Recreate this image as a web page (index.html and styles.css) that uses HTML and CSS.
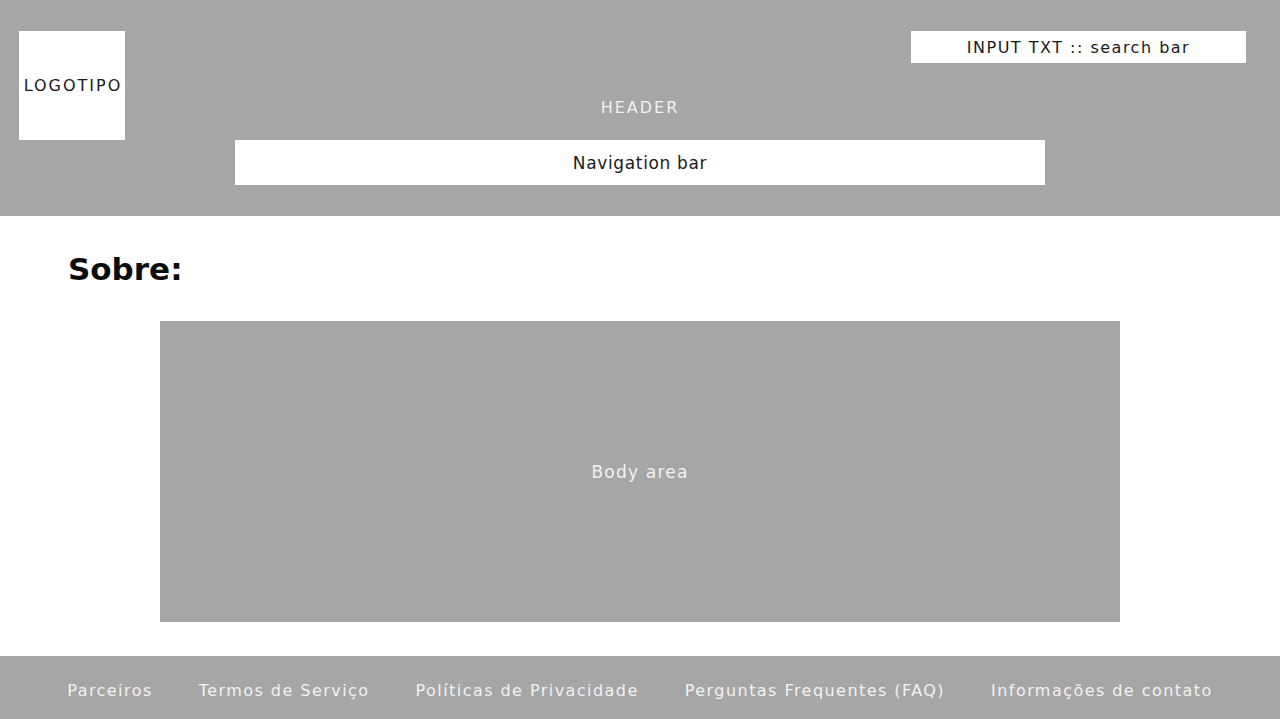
FILE: index.html
```html
<!DOCTYPE html>
<html lang="pt">
<head>
<meta charset="utf-8">
<title>Sobre</title>
<link rel="stylesheet" href="styles.css">
</head>
<body>
<header class="site-header">
  <div class="header-top">
    <div class="logo">LOGOTIPO</div>
    <div class="header-label">HEADER</div>
    <div class="search-wrap"><div class="search">INPUT TXT :: search bar</div></div>
  </div>
  <nav class="nav">Navigation bar</nav>
</header>
<main class="main">
  <h1 class="title">Sobre:</h1>
  <section class="body-area">Body area</section>
</main>
<footer class="site-footer">
  <a class="foot-link">Parceiros</a>
  <a class="foot-link">Termos de Serviço</a>
  <a class="foot-link">Políticas de Privacidade</a>
  <a class="foot-link">Perguntas Frequentes (FAQ)</a>
  <a class="foot-link">Informações de contato</a>
</footer>
</body>
</html>
```
FILE: styles.css
```css
* { box-sizing: border-box; }
html, body { margin: 0; padding: 0; }
body {
  width: 1280px;
  height: 719px;
  overflow: hidden;
  background: #ffffff;
  font-family: "DejaVu Sans", "Liberation Sans", sans-serif;
  color: #1a1a1a;
}
.site-header {
  background: #a6a6a6;
  height: 216px;
  padding: 31px 19px 0 19px;
}
.header-top {
  display: grid;
  grid-template-columns: 1fr auto 1fr;
  align-items: end;
}
.logo {
  width: 106px;
  height: 109px;
  background: #ffffff;
  display: flex;
  align-items: center;
  justify-content: center;
  font-size: 16px;
  letter-spacing: 2px;
  padding-left: 2px;
}
.header-label {
  color: #f2f2f2;
  font-size: 16px;
  letter-spacing: 2px;
  padding-bottom: 23px;
}
.search-wrap {
  align-self: start;
  display: flex;
  justify-content: flex-end;
  padding-right: 15px;
}
.search {
  width: 335px;
  height: 32px;
  background: #ffffff;
  display: flex;
  align-items: center;
  justify-content: center;
  font-size: 16px;
  letter-spacing: 1.5px;
}
.nav {
  width: 810px;
  height: 45px;
  margin: 0 auto;
  background: #ffffff;
  display: flex;
  align-items: center;
  justify-content: center;
  font-size: 17px;
  letter-spacing: 0.65px;
}
.main {
  height: 440px;
  padding-top: 34px;
}
.title {
  margin: 0 0 0 68px;
  font-size: 31px;
  line-height: 38px;
  font-weight: bold;
  color: #0d0d0d;
}
.body-area {
  width: 960px;
  height: 301px;
  margin: 33px auto 0;
  background: #a6a6a6;
  color: #f2f2f2;
  font-size: 17px;
  letter-spacing: 1.2px;
  display: flex;
  align-items: center;
  justify-content: center;
}
.site-footer {
  height: 63px;
  background: #a6a6a6;
  display: flex;
  align-items: center;
  justify-content: center;
  gap: 46px;
  padding-top: 5px;
}
.foot-link {
  color: #f2f2f2;
  font-size: 16px;
  letter-spacing: 1.45px;
  text-decoration: none;
}
```
